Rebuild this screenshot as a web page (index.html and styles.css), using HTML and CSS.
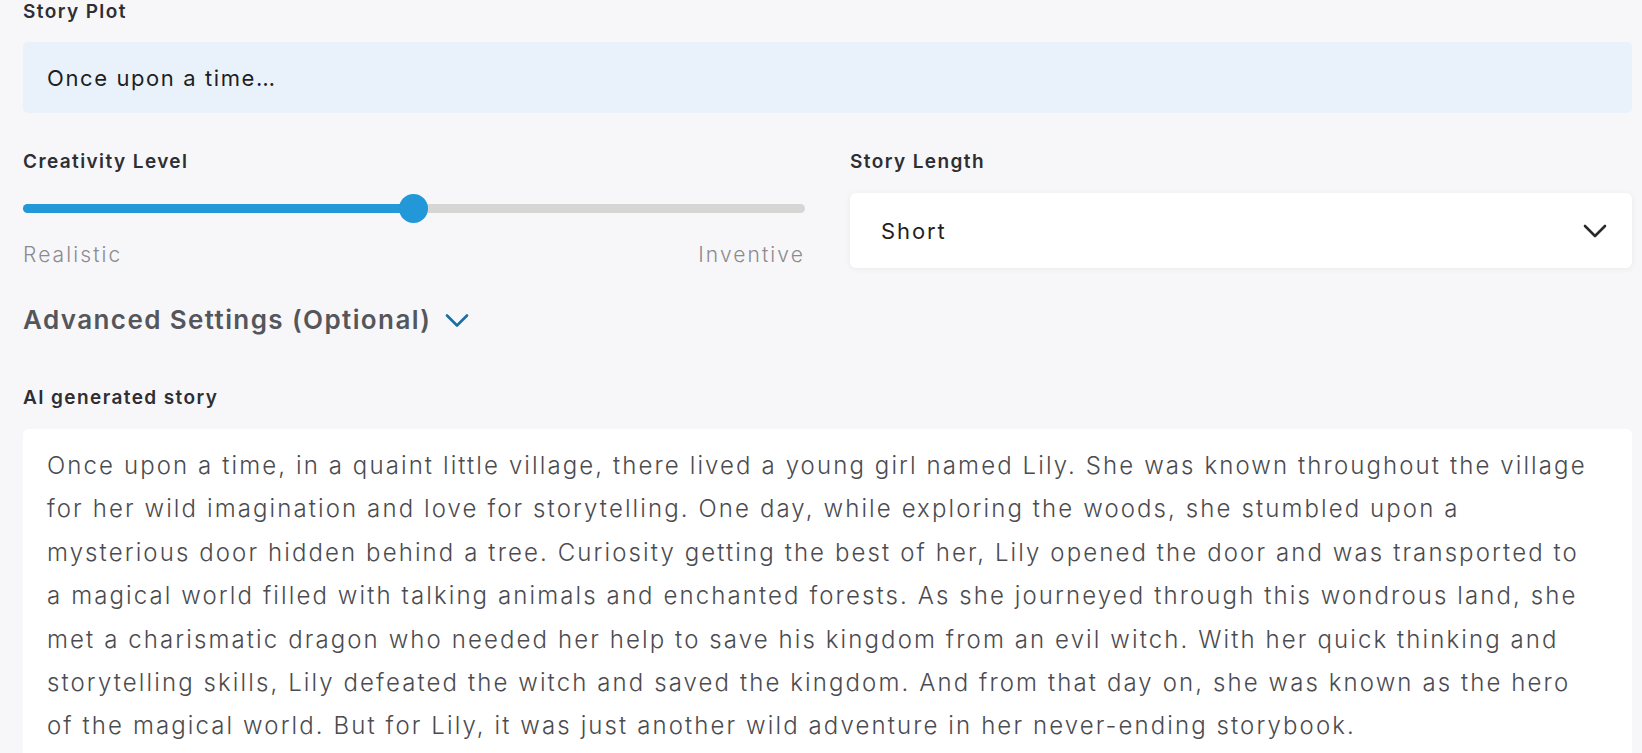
FILE: index.html
```html
<!DOCTYPE html>
<html lang="en">
<head>
<meta charset="utf-8">
<title>Story Generator</title>
<link rel="stylesheet" href="styles.css">
</head>
<body>
<div class="page">
  <div class="field">
    <div class="label">Story Plot</div>
    <div class="plot-input">Once upon a time…</div>
  </div>

  <div class="row">
    <div class="col">
      <div class="label">Creativity Level</div>
      <div class="slider">
        <div class="track">
          <div class="fill" style="width: 50%"></div>
          <div class="thumb" style="left: 50%"></div>
        </div>
      </div>
      <div class="scale">
        <span>Realistic</span>
        <span>Inventive</span>
      </div>
    </div>
    <div class="col">
      <div class="label">Story Length</div>
      <div class="select">
        <span>Short</span>
        <svg class="sel-chev" width="24" height="14" viewBox="0 0 24 14"><path d="M2 2 L12 12 L22 2" fill="none" stroke="#2a2a2a" stroke-width="2.6" stroke-linecap="round" stroke-linejoin="round"/></svg>
      </div>
    </div>
  </div>

  <div class="advanced">
    <span>Advanced Settings (Optional)</span>
    <svg class="adv-chev" width="24" height="15" viewBox="0 0 24 15"><path d="M2 2.5 L12 12.5 L22 2.5" fill="none" stroke="#1a6fa3" stroke-width="2.6" stroke-linecap="round" stroke-linejoin="round"/></svg>
  </div>

  <div class="label story-label">AI generated story</div>
  <div class="story">Once upon a time, in a quaint little village, there lived a young girl named Lily. She was known throughout the village for her wild imagination and love for storytelling. One day, while exploring the woods, she stumbled upon a mysterious door hidden behind a tree. Curiosity getting the best of her, Lily opened the door and was transported to a magical world filled with talking animals and enchanted forests. As she journeyed through this wondrous land, she met a charismatic dragon who needed her help to save his kingdom from an evil witch. With her quick thinking and storytelling skills, Lily defeated the witch and saved the kingdom. And from that day on, she was known as the hero of the magical world. But for Lily, it was just another wild adventure in her never-ending storybook.</div>
</div>
</body>
</html>
```

FILE: styles.css
```css
html, body {
  margin: 0;
  padding: 0;
  background: #f7f7f9;
}

body {
  font-family: Inter, "Open Sans", sans-serif;
  color: #2b2b2f;
  overflow: hidden;
}

.page {
  padding: 0 10px 0 23px;
}

.label {
  font-size: 19px;
  font-weight: 600;
  line-height: 24px;
  color: #2e2e33;
  letter-spacing: 1.4px;
}

.plot-input {
  margin-top: 18px;
  height: 71px;
  box-sizing: border-box;
  background: #e9f2fa;
  border-radius: 5px;
  padding-left: 24px;
  display: flex;
  align-items: center;
  font-size: 22px;
  color: #1f1f22;
  letter-spacing: 1.6px;
}

.row {
  margin-top: 37px;
  display: grid;
  grid-template-columns: 1fr 1fr;
  column-gap: 45px;
}

.slider {
  margin-top: 19px;
  height: 30px;
  display: flex;
  align-items: center;
}

.track {
  position: relative;
  flex: 1;
  height: 9px;
  border-radius: 5px;
  background: #d6d6d4;
}

.fill {
  height: 100%;
  border-radius: 5px;
  background: #2298d8;
}

.thumb {
  position: absolute;
  top: 50%;
  width: 29px;
  height: 29px;
  margin-left: -15px;
  margin-top: -14.5px;
  border-radius: 50%;
  background: #2298d8;
}

.scale {
  margin-top: 20px;
  display: flex;
  justify-content: space-between;
  font-size: 21px;
  font-weight: 300;
  line-height: 24px;
  color: #8b8b8e;
  letter-spacing: 2.1px;
}

.select {
  margin-top: 19px;
  height: 75px;
  box-sizing: border-box;
  background: #ffffff;
  border-radius: 6px;
  box-shadow: 0 1px 6px rgba(40, 40, 70, 0.06);
  padding: 0 25px 0 31px;
  display: flex;
  align-items: center;
  justify-content: space-between;
  font-size: 22px;
  color: #1f1f22;
  letter-spacing: 1.9px;
}

.advanced {
  margin-top: 36px;
  display: flex;
  align-items: center;
  gap: 14px;
  font-size: 26px;
  font-weight: 600;
  line-height: 32px;
  color: #55565b;
  letter-spacing: 1.4px;
}

.adv-chev {
  margin-top: 1px;
}

.story-label {
  margin-top: 50px;
}

.story {
  margin-top: 19px;
  background: #ffffff;
  border-radius: 6px;
  padding: 15px 29px 20px 24px;
  font-size: 24px;
  font-weight: 300;
  line-height: 43.4px;
  color: #4b4b50;
  letter-spacing: 2.1px;
}
```
